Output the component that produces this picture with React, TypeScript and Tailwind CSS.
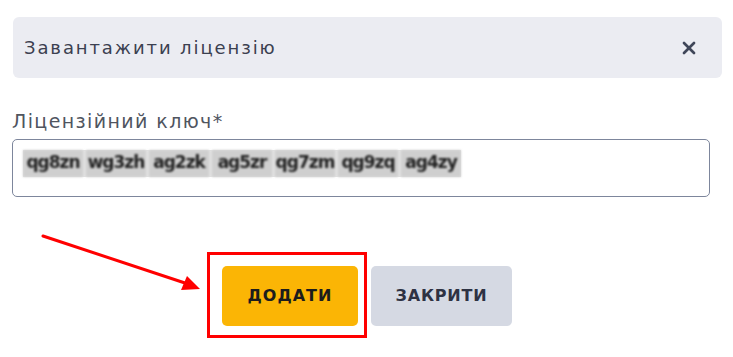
import { X } from "lucide-react";

const keyParts = ["qg8zn", "wg3zh", "ag2zk", "ag5zr", "qg7zm", "qg9zq", "ag4zy"];

export default function App() {
  return (
    <div className="relative w-[733px] h-[357px] bg-white overflow-hidden font-['DejaVu_Sans',sans-serif]">
      <div className="pt-[17px] pl-[13px] pr-[11px]">
        <div className="h-[61px] rounded-md bg-[#ebecf2] flex items-center justify-between pl-[11px] pr-[23px]">
          <span className="text-[18px] tracking-[1.9px] text-[#3b4050]">Завантажити ліцензію</span>
          <X className="w-[20px] h-[20px] text-[#3f4659]" strokeWidth={3.2} />
        </div>
      </div>

      <div className="pl-[12px] pr-[23px] mt-[31px]">
        <label className="block text-[19px] leading-[24px] tracking-[1.4px] text-[#50555f]">Ліцензійний ключ*</label>
        <div className="mt-[6px] h-[58px] rounded-[5px] border border-[#7d869c] flex items-start pt-[10px] pl-[10px]">
          <div className="flex gap-[3px] bg-[#e2e2e2]">
            {keyParts.map((p) => (
              <span
                key={p}
                className="w-[60px] h-[27px] bg-[#cfcfcf] text-[#222] text-[17px] leading-[25px] text-center blur-[0.9px] font-bold tracking-[-1px]"
              >
                {p}
              </span>
            ))}
          </div>
        </div>
      </div>

      <div className="flex gap-[13px] pl-[222px] mt-[69px]">
        <div className="relative">
          <div className="absolute left-[-15px] top-[-14px] w-[160px] h-[86px] border-[3px] border-[#ff0000]" />
          <button className="relative w-[136px] h-[60px] rounded-[5px] bg-[#fbb505] text-[16px] font-bold tracking-[1px] text-[#1c1c1c]">
            ДОДАТИ
          </button>
        </div>
        <button className="w-[141px] h-[60px] rounded-[5px] bg-[#d5d9e3] text-[16px] font-bold tracking-[0.8px] text-[#2e3243]">
          ЗАКРИТИ
        </button>
      </div>

      <svg className="absolute left-0 top-0" width="733" height="357" viewBox="0 0 733 357">
        <line x1="43" y1="236" x2="188" y2="284" stroke="#ff0000" strokeWidth="3" strokeLinecap="round" />
        <polygon points="200,289 181,290 187,276" fill="#ff0000" />
      </svg>
    </div>
  );
}
